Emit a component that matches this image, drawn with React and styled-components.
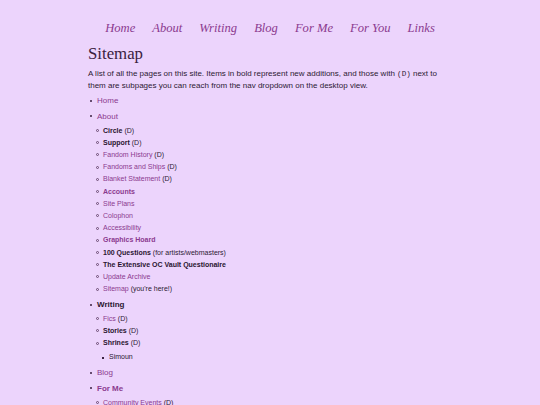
import React from "react";
import styled, { createGlobalStyle } from "styled-components";

const Global = createGlobalStyle`
  html, body { margin: 0; padding: 0; background: #ecd4fc; }
  body { font-family: "Liberation Sans", Arial, sans-serif; color: #2d1a33; }
`;

const Page = styled.div`
  width: 364px;
  margin: 0 auto;
  padding-top: 20px;
`;

const Nav = styled.nav`
  display: flex;
  justify-content: center;
  gap: 17px;
  font-family: "Liberation Serif", Georgia, serif;
  font-style: italic;
  font-size: 12.6px;
  line-height: 16px;
  margin: 0 -40px;
`;

const NavLink = styled.a`
  color: #8b3a8f;
  text-decoration: none;
`;

const Title = styled.h1`
  font-family: "Liberation Serif", Georgia, serif;
  font-weight: normal;
  font-size: 16.8px;
  line-height: 20px;
  margin: 8px 0 0;
  color: #3a2140;
`;

const Intro = styled.p`
  font-size: 8px;
  line-height: 11px;
  margin: 3.5px 0 0;
  padding-right: 10px;
  color: #2d1a33;
`;

const Code = styled.code`
  font-family: "Liberation Mono", monospace;
  font-size: 7.6px;
`;

const TopList = styled.ul`
  list-style: none;
  margin: 4.5px 0 0;
  padding-left: 9px;
  font-size: 8px;
  line-height: 12px;
`;

const TopItem = styled.li`
  margin-bottom: 3.5px;
  &::before {
    content: "";
    display: inline-block;
    width: 2px;
    height: 2px;
    border-radius: 50%;
    background: #3a2140;
    margin-left: -7px;
    margin-right: 5px;
    vertical-align: 1.2px;
  }
`;

const SubList = styled.ul`
  list-style: none;
  margin: 2px 0 0;
  padding-left: 6px;
  font-size: 7px;
  line-height: 12.2px;
`;

const SubItem = styled.li`
  &::before {
    content: "";
    display: inline-block;
    box-sizing: border-box;
    width: ${(p) => (p.$square ? "2.2px" : "3px")};
    height: ${(p) => (p.$square ? "2.2px" : "3px")};
    border-radius: ${(p) => (p.$square ? "0" : "50%")};
    border: ${(p) => (p.$square ? "none" : "0.8px solid #6b4a72")};
    background: ${(p) => (p.$square ? "#3a2140" : "transparent")};
    margin-left: -7.5px;
    margin-right: ${(p) => (p.$square ? "5.3px" : "4.5px")};
    vertical-align: 0.6px;
  }
`;

const Link = styled.a`
  color: #8b3a8f;
  text-decoration: none;
  font-weight: ${(p) => (p.$bold ? "bold" : "normal")};
`;

const Plain = styled.span`
  color: #2a1530;
  font-weight: ${(p) => (p.$bold ? "bold" : "normal")};
`;

const Note = styled.span`
  color: #2d1a33;
`;

const navItems = ["Home", "About", "Writing", "Blog", "For Me", "For You", "Links"];

const about = [
  { t: "Circle", b: true, link: false, n: "(D)" },
  { t: "Support", b: true, link: false, n: "(D)" },
  { t: "Fandom History", link: true, n: "(D)" },
  { t: "Fandoms and Ships", link: true, n: "(D)" },
  { t: "Blanket Statement", link: true, n: "(D)" },
  { t: "Accounts", b: true, link: true },
  { t: "Site Plans", link: true },
  { t: "Colophon", link: true },
  { t: "Accessibility", link: true },
  { t: "Graphics Hoard", b: true, link: true },
  { t: "100 Questions", b: true, link: false, n: "(for artists/webmasters)" },
  { t: "The Extensive OC Vault Questionaire", b: true, link: false },
  { t: "Update Archive", link: true },
  { t: "Sitemap", link: true, n: "(you're here!)" },
];

function Entry({ t, b, link, n }) {
  return (
    <>
      {link ? <Link href="#" $bold={b}>{t}</Link> : <Plain $bold={b}>{t}</Plain>}
      {n && <> <Note>{n}</Note></>}
    </>
  );
}

export default function App() {
  return (
    <>
      <Global />
      <Page>
        <Nav>
          {navItems.map((n) => (
            <NavLink href="#" key={n}>{n}</NavLink>
          ))}
        </Nav>
        <Title>Sitemap</Title>
        <Intro>
          A list of all the pages on this site. Items in bold represent new additions, and those with{" "}
          <Code>(D)</Code> next to them are subpages you can reach from the nav dropdown on the desktop view.
        </Intro>
        <TopList>
          <TopItem><Link href="#">Home</Link></TopItem>
          <TopItem>
            <Link href="#">About</Link>
            <SubList>
              {about.map((a) => (
                <SubItem key={a.t}><Entry {...a} /></SubItem>
              ))}
            </SubList>
          </TopItem>
          <TopItem>
            <Plain $bold>Writing</Plain>
            <SubList>
              <SubItem><Entry t="Fics" link n="(D)" /></SubItem>
              <SubItem><Entry t="Stories" b n="(D)" /></SubItem>
              <SubItem>
                <Entry t="Shrines" b n="(D)" />
                <SubList>
                  <SubItem $square><Plain>Simoun</Plain></SubItem>
                </SubList>
              </SubItem>
            </SubList>
          </TopItem>
          <TopItem><Link href="#">Blog</Link></TopItem>
          <TopItem>
            <Link href="#" $bold>For Me</Link>
            <SubList>
              <SubItem><Entry t="Community Events" link n="(D)" /></SubItem>
            </SubList>
          </TopItem>
        </TopList>
      </Page>
    </>
  );
}
